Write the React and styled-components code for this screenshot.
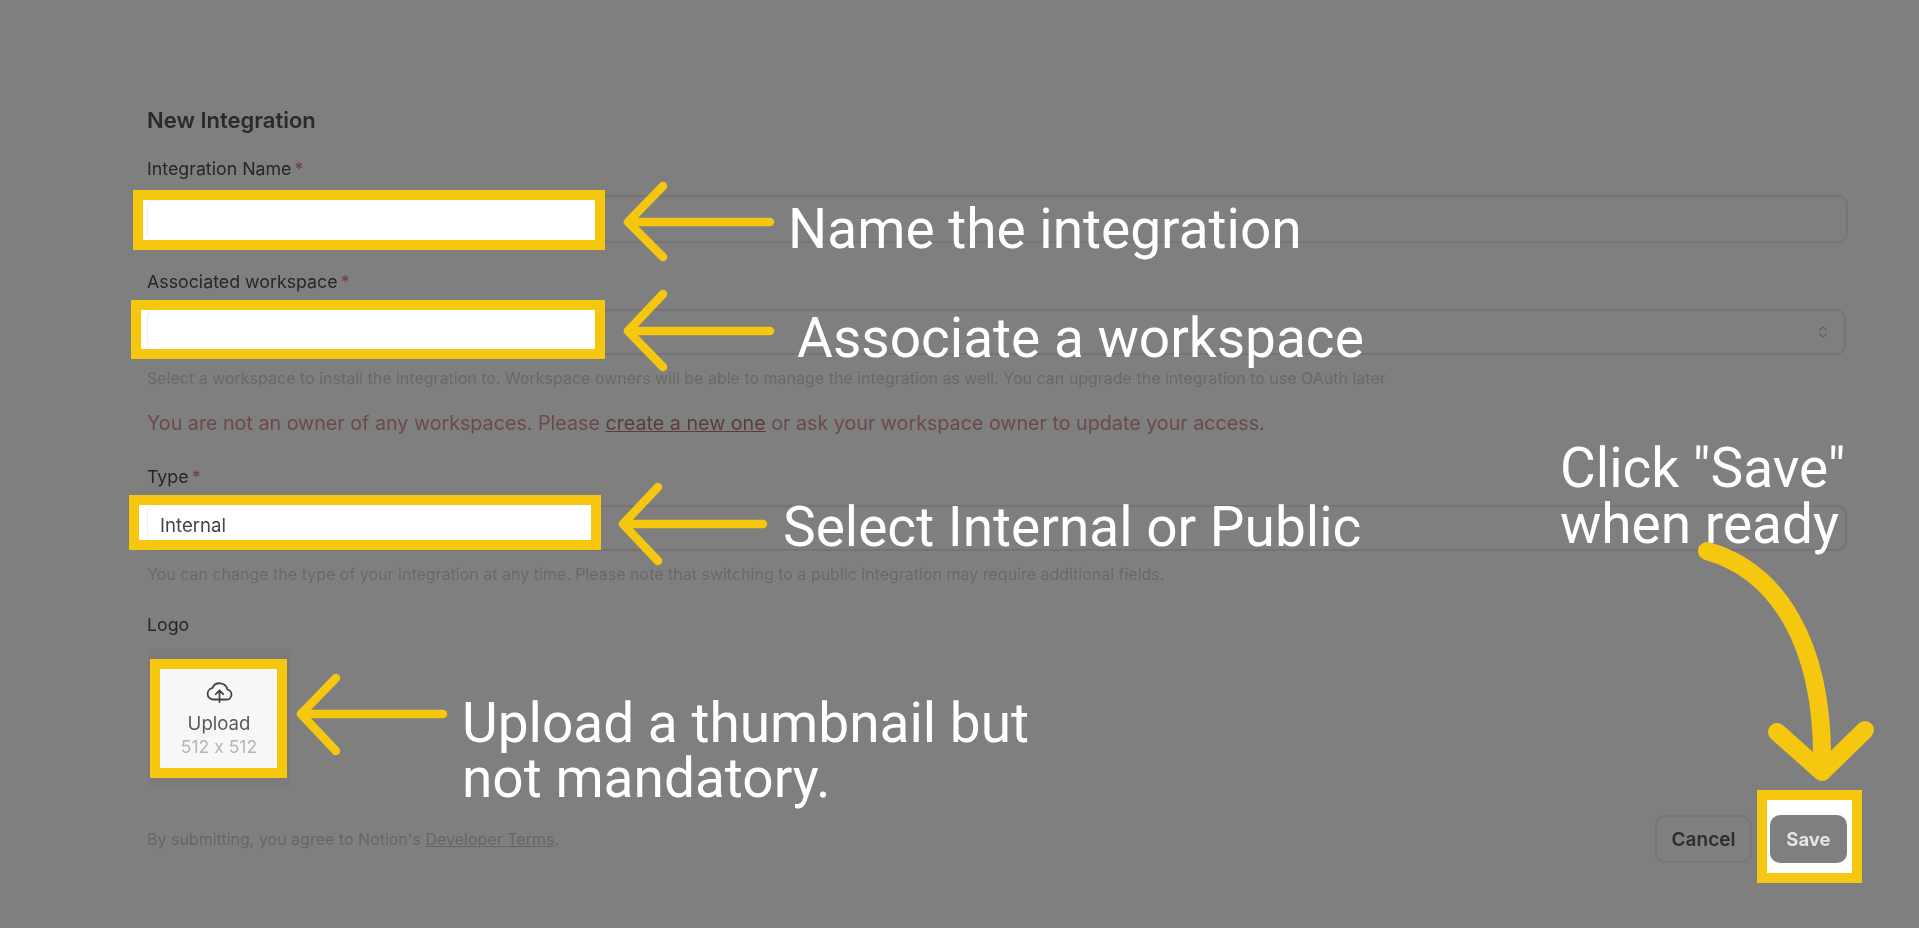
import React from "react";
import styled, { createGlobalStyle, css } from "styled-components";
import { ChevronsUpDown } from "lucide-react";

const GlobalStyle = createGlobalStyle`
	html, body {
		margin: 0;
		padding: 0;
		background: #7f7f7f;
	}
	* {
		box-sizing: border-box;
	}
`;

const highlights = [
	{ left: 133, top: 190, width: 472, height: 60, corner: true },
	{ left: 131, top: 300, width: 474, height: 59, corner: true },
	{ left: 129, top: 495, width: 472, height: 55, corner: true },
	{ left: 150, top: 659, width: 137, height: 119, fill: "#f7f7f7" },
	{ left: 1757, top: 790, width: 105, height: 93 },
];

const captions = [
	{ left: 788, top: 201, text: "Name the integration" },
	{ left: 797, top: 310, text: "Associate a workspace" },
	{ left: 783, top: 499, text: "Select Internal or Public" },
	{ left: 462, top: 696, leading: 55, text: "Upload a thumbnail but\nnot mandatory." },
	{ left: 1560, top: 440, text: 'Click "Save"\nwhen ready' },
];

const CloudIcon = () => (
	<svg width='27' height='23' viewBox='0 0 27 23' fill='none' stroke='currentColor' strokeWidth='1.8' strokeLinecap='round' strokeLinejoin='round'>
		<path d='M7 19.5H20.5A5 5 0 0 0 21.5 9.6A8 8 0 0 0 6.3 8.2A5.7 5.7 0 0 0 7 19.5Z' />
		<path d='M13.5 22V11M9.8 14.2L13.5 10.5L17.2 14.2' />
	</svg>
);

const App = () => {
	return (
		<Page>
			<GlobalStyle />
			<Title>New Integration</Title>

			<Label>
				Integration Name<Required>*</Required>
			</Label>
			<NameInput />

			<WorkspaceLabel>
				Associated workspace<Required>*</Required>
			</WorkspaceLabel>
			<SelectBox>
				<SelectIcon>
					<ChevronsUpDown size={16} strokeWidth={2} />
				</SelectIcon>
			</SelectBox>
			<Help>
				Select a workspace to install the integration to. Workspace owners will be able to manage the
				integration as well. You can upgrade the integration to use OAuth later
			</Help>
			<ErrorText>
				You are not an owner of any workspaces. Please <u>create a new one</u> or ask your workspace owner to
				update your access.
			</ErrorText>

			<TypeLabel>
				Type<Required>*</Required>
			</TypeLabel>
			<TypeSelect>
				<TypeValue>Internal</TypeValue>
			</TypeSelect>
			<Help>
				You can change the type of your integration at any time. Please note that switching to a public
				integration may require additional fields.
			</Help>

			<LogoLabel>Logo</LogoLabel>
			<UploadCard>
				<UploadInner>
					<CloudIcon />
					<UploadText>Upload</UploadText>
					<UploadSize>512 x 512</UploadSize>
				</UploadInner>
			</UploadCard>

			<Footer>
				<Terms>
					By submitting, you agree to Notion's <u>Developer Terms</u>.
				</Terms>
				<Buttons>
					<CancelButton>Cancel</CancelButton>
					<SaveButton>Save</SaveButton>
				</Buttons>
			</Footer>

			{highlights.map((h) => (
				<Highlight
					key={h.left}
					$left={h.left}
					$top={h.top}
					$width={h.width}
					$height={h.height}
					$fill={h.fill}
					$corner={h.corner}
				/>
			))}
			{captions.map((c) => (
				<Caption key={c.left} $left={c.left} $top={c.top} $leading={c.leading}>
					{c.text}
				</Caption>
			))}

			<Arrows viewBox='0 0 1919 928' fill='none' stroke='#f5c70f' strokeLinecap='round' strokeLinejoin='round'>
				<g strokeWidth='8.5'>
					<path d='M770 222H628M663 186L628 222L663 257' />
					<path d='M770 331H628M663 294L628 331L663 367' />
					<path d='M763 524H623M658 487L623 524L658 561' />
					<path d='M443 714H301M336 678L301 714L336 751' />
				</g>
				<g strokeWidth='18'>
					<path d='M1707 551C1775 570 1825 640 1822 770' />
					<path d='M1777 732L1822 772L1865 730' />
				</g>
			</Arrows>
		</Page>
	);
};

// the reference is a scaled-up capture, all of its form text is slightly soft
const soft = css`
	filter: blur(0.45px);
`;

const Page = styled.div`
	position: relative;
	width: 1919px;
	height: 928px;
	overflow: hidden;
	padding: 108px 71px 0 147px;
	background: #7f7f7f;
	font-family: Inter, "Liberation Sans", sans-serif;
	font-feature-settings: "calt" 0;
`;
const Title = styled.h1`
	${soft}
	margin: 0 0 27px;
	font-size: 22px;
	line-height: 24px;
	font-weight: 600;
	color: #2a2a2a;
`;
const Label = styled.div`
	${soft}
	margin-bottom: 16px;
	font-size: 17.8px;
	line-height: 20px;
	font-weight: 400;
	color: #262626;
`;
const WorkspaceLabel = styled(Label)`
	margin-top: 29px;
	margin-bottom: 17px;
`;
const TypeLabel = styled(Label)`
	margin-top: 33px;
	margin-bottom: 18px;
`;
const LogoLabel = styled(Label)`
	margin-top: 31px;
	margin-bottom: 13px;
`;
const Required = styled.span`
	margin-left: 3px;
	color: #6f3d3d;
`;
const NameInput = styled.div`
	height: 48px;
	margin-left: 1px;
	border: 2px solid #767676;
	border-radius: 10px;
`;
const SelectBox = styled.div`
	display: flex;
	align-items: center;
	justify-content: flex-end;
	height: 46px;
	margin-right: 2px;
	margin-bottom: 14px;
	padding-right: 13px;
	border: 2px solid #747474;
	border-radius: 10px;
`;
const SelectIcon = styled.span`
	${soft}
	display: flex;
	color: #646464;
`;
const TypeSelect = styled(SelectBox)`
	justify-content: flex-start;
	margin-right: 1px;
	padding: 0 0 0 11px;
`;
const TypeValue = styled.span`
	${soft}
	position: relative;
	z-index: 2;
	margin-top: -7px;
	font-size: 18.6px;
	color: #444;
`;
const Help = styled.p`
	${soft}
	margin: 0;
	font-size: 16px;
	line-height: 19px;
	color: #696969;
`;
const ErrorText = styled.p`
	${soft}
	margin: 24px 0 0;
	font-size: 19.7px;
	line-height: 22px;
	color: #6d4a4a;

	u {
		color: #5a3c3c;
	}
`;
const UploadCard = styled.div`
	width: 142px;
	height: 140px;
	margin-left: 1px;
	background: #7b7b7b;
	border-radius: 6px;
`;
const UploadInner = styled.div`
	${soft}
	position: relative;
	z-index: 2;
	display: flex;
	flex-direction: column;
	align-items: center;
	padding-top: 32px;
	color: #444;
`;
const UploadText = styled.span`
	margin-top: 9px;
	font-size: 18.6px;
	line-height: 22px;
	font-weight: 400;
	color: #5a5a5a;
`;
const UploadSize = styled.span`
	margin-top: 2px;
	font-size: 17.5px;
	line-height: 22px;
	color: #b5b5b5;
`;
const Footer = styled.div`
	display: flex;
	align-items: center;
	justify-content: space-between;
	margin-top: 27px;
`;
const Terms = styled.span`
	${soft}
	font-size: 16px;
	color: #666;
`;
const Buttons = styled.div`
	display: flex;
	gap: 18px;
	margin-right: 1px;
`;
const CancelButton = styled.button`
	${soft}
	width: 97px;
	height: 48px;
	padding: 0;
	border: 2px solid #777;
	border-radius: 10px;
	background: #7f7f7f;
	font: 600 19px Inter, sans-serif;
	color: #2e2e2e;
`;
const SaveButton = styled(CancelButton)`
	position: relative;
	z-index: 2;
	width: 77px;
	border: none;
	font-size: 18.5px;
	font-weight: 700;
	color: #e4e4e4;
`;
const Highlight = styled.div`
	position: absolute;
	z-index: 1;
	left: ${(p) => p.$left}px;
	top: ${(p) => p.$top}px;
	width: ${(p) => p.$width}px;
	height: ${(p) => p.$height}px;
	border: 10px solid #f5c70f;
	background: ${(p) => p.$fill || "#fff"};

	${(p) =>
		p.$corner &&
		css`
			&::before {
				content: "";
				display: block;
				width: 10px;
				height: 100%;
				margin-left: ${147 - p.$left - 10}px;
				border-left: 1px solid #ececec;
				border-top: 1px solid #f2f2f2;
				border-radius: 8px 0 0 8px;
			}
		`}
`;
const Caption = styled.div`
	position: absolute;
	z-index: 3;
	left: ${(p) => p.$left}px;
	top: ${(p) => p.$top}px;
	white-space: pre-line;
	font-family: Roboto, sans-serif;
	font-size: 55px;
	line-height: ${(p) => p.$leading || 56}px;
	color: #fff;
`;
const Arrows = styled.svg`
	position: absolute;
	z-index: 4;
	left: 0;
	top: 0;
	width: 1919px;
	height: 928px;
`;

export default App;
